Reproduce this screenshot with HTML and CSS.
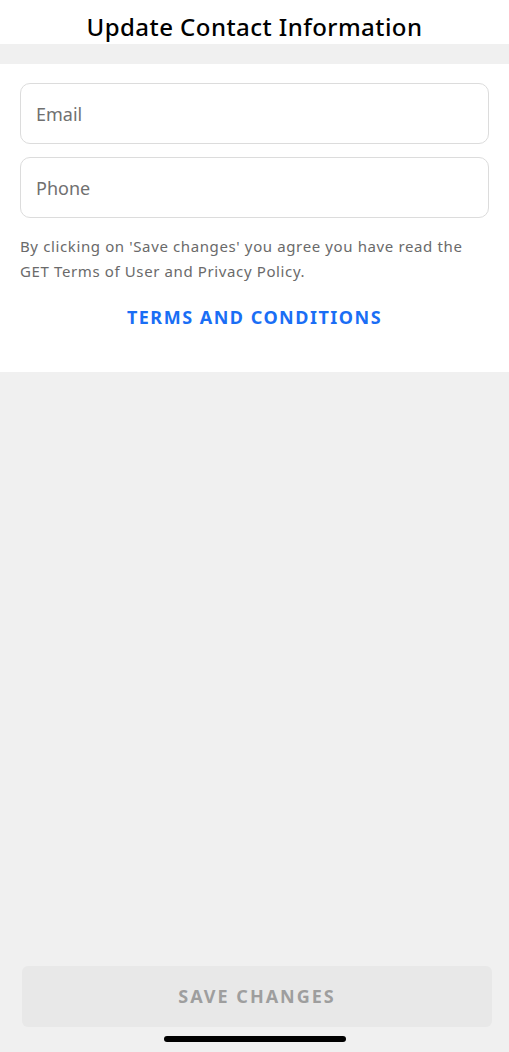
FILE: index.html
```html
<!DOCTYPE html>
<html lang="en">
<head>
    <meta charset="UTF-8">
    <meta name="viewport" content="width=device-width, initial-scale=1.0">
    <title>Update Contact Information</title>
    <link rel="stylesheet" href="styles.css">
</head>
<body>
    <div id="app">
        <header class="top-bar">
            <h1>Update Contact Information</h1>
        </header>
        <div class="spacer"></div>
        <section class="form-card">
            <input type="email" class="field" placeholder="Email">
            <input type="tel" class="field" placeholder="Phone">
            <p class="disclaimer">By clicking on 'Save changes' you agree you have read the GET Terms of User and Privacy Policy.</p>
            <a href="#" class="terms-link">TERMS AND CONDITIONS</a>
        </section>
        <div class="fill"></div>
        <footer class="bottom">
            <button class="save-button" disabled>SAVE CHANGES</button>
            <div class="home-bar"></div>
        </footer>
    </div>
</body>
</html>
```

FILE: styles.css
```css
body {
    font-family: "Noto Sans", Lato, sans-serif;
    margin: 0;
    padding: 0;
    background-color: #f0f0f0;
}

#app {
    display: flex;
    flex-direction: column;
    height: 1052px;
}

.top-bar {
    background-color: #fff;
    height: 44px;
    display: flex;
    justify-content: center;
    align-items: center;
}

.top-bar h1 {
    margin: 0;
    font-size: 24px;
    font-weight: 500;
    color: #000;
    letter-spacing: 0.45px;
    padding-top: 9px;
}

.spacer {
    height: 20px;
}

.form-card {
    background-color: #fff;
    padding: 19px 20px 0 20px;
    height: 289px;
    display: flex;
    flex-direction: column;
}

.field {
    height: 61px;
    box-sizing: border-box;
    border: 1px solid #dcdcdc;
    border-radius: 10px;
    padding: 0 15px;
    font-family: inherit;
    font-size: 18px;
    color: #333;
    margin-bottom: 13px;
    outline: none;
}

.field::placeholder {
    color: #707070;
}

.disclaimer {
    margin: 3px 0 0 0;
    font-size: 15px;
    line-height: 25px;
    letter-spacing: 0.62px;
    color: #6a6a6a;
}

.terms-link {
    align-self: center;
    margin-top: 21px;
    font-size: 18px;
    font-weight: 700;
    color: #1a6ef5;
    text-decoration: none;
    letter-spacing: 1.5px;
}

.fill {
    flex: 1;
}

.bottom {
    display: flex;
    flex-direction: column;
    align-items: center;
    padding-bottom: 10px;
}

.save-button {
    width: 470px;
    height: 61px;
    margin-left: 5px;
    padding-bottom: 2px;
    background-color: #e8e8e8;
    border: none;
    border-radius: 6px;
    color: #9e9e9e;
    font-family: inherit;
    font-size: 18px;
    font-weight: 700;
    letter-spacing: 2px;
}

.home-bar {
    margin-top: 9px;
    width: 182px;
    height: 6px;
    border-radius: 3px;
    background-color: #000;
}
```
